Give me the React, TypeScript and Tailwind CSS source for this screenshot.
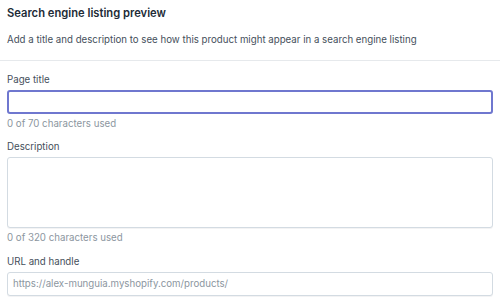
export default function App() {
  return (
    <div
      className="w-[500px] h-[300px] bg-white overflow-hidden text-[#212b36]"
      style={{ fontFamily: 'Inter, "Noto Sans", sans-serif' }}
    >
      <div className="px-[7px] pt-[3px]">
        <div className="text-[11.2px] leading-[20px] font-semibold">Search engine listing preview</div>
        <div className="mt-[7px] text-[9.7px] leading-[20px] text-[#454f5b]">
          Add a title and description to see how this product might appear in a search engine listing
        </div>
      </div>
      <div className="mt-[10px] border-t border-[#e6e9ec]" />
      <div className="px-[7px] pt-[9px] flex flex-col">
        <div className="text-[9.7px] leading-[20px] text-[#454f5b]">Page title</div>
        <div className="h-[24px] w-[486px] rounded-[3px] border-2 border-[#6f77cf] bg-white" />
        <div className="text-[9.7px] leading-[20px] text-[#8c96a0]">0 of 70 characters used</div>
        <div className="mt-[3px] text-[9.7px] leading-[20px] text-[#454f5b]">Description</div>
        <div className="h-[71px] w-[486px] rounded-[3px] border border-[#d3dbe2] shadow-[0_1px_0_rgba(22,29,37,0.05)] bg-white" />
        <div className="text-[9.7px] leading-[20px] text-[#8c96a0]">0 of 320 characters used</div>
        <div className="mt-[4px] text-[9.7px] leading-[20px] text-[#454f5b]">URL and handle</div>
        <div className="h-[24px] w-[486px] rounded-[3px] border border-[#d3dbe2] shadow-[0_1px_0_rgba(22,29,37,0.05)] bg-white flex items-center px-[5px] text-[9.7px] text-[#8c96a0]">
          https://alex-munguia.myshopify.com/products/
        </div>
      </div>
    </div>
  );
}
